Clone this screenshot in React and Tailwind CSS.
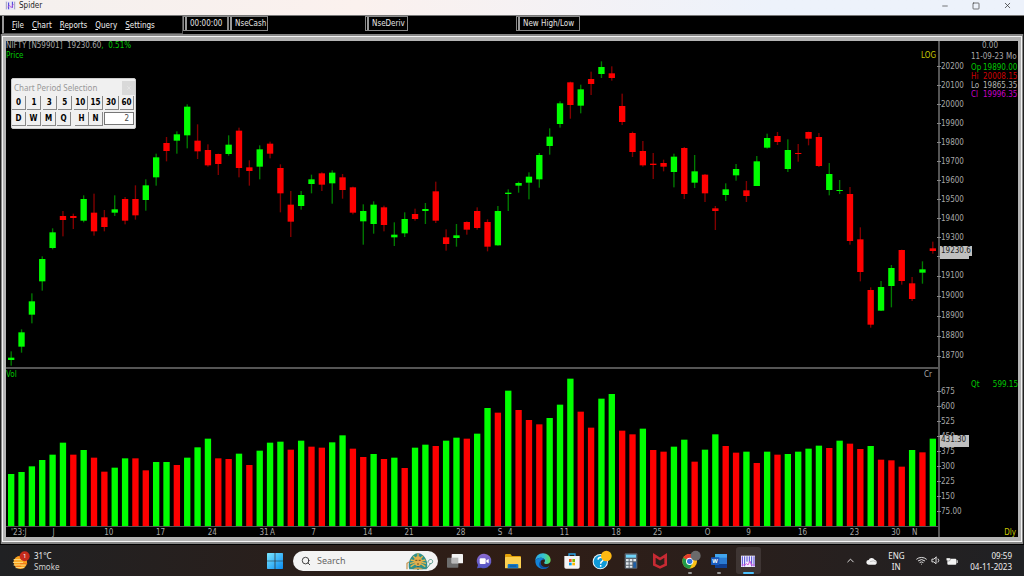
// App.jsx
import React, { useState } from 'react';
import { FiMinus, FiSquare, FiX, FiSearch, FiChevronUp, FiWifi, FiVolume1 } from 'react-icons/fi';

const GREEN = '#00ff00';
const RED = '#ff0000';

// [direction, high, body top, body bottom, low]
const candles = [
  ['g', 1054, 1073, 1080, 1097], ['g', 988, 997, 1040, 1058], ['g', 880, 904, 944, 970], ['g', 769, 777, 844, 872],
  ['g', 685, 697, 744, 748], ['r', 633, 648, 660, 709], ['r', 641, 648, 654, 687], ['g', 586, 597, 662, 667],
  ['r', 581, 638, 694, 707], ['r', 630, 652, 681, 694], ['g', 586, 628, 638, 648], ['r', 591, 597, 662, 673],
  ['r', 556, 597, 646, 659], ['g', 538, 556, 600, 632], ['g', 461, 472, 532, 557], ['r', 411, 429, 453, 484],
  ['g', 394, 403, 422, 461], ['g', 313, 320, 406, 445], ['r', 373, 422, 454, 477], ['r', 433, 450, 496, 500],
  ['r', 461, 462, 492, 525], ['g', 406, 434, 462, 467], ['r', 383, 392, 504, 532], ['r', 481, 502, 513, 557],
  ['g', 436, 448, 500, 538], ['r', 425, 431, 461, 475], ['r', 493, 504, 580, 637], ['r', 573, 614, 665, 711],
  ['g', 573, 585, 618, 629], ['g', 524, 538, 552, 580], ['r', 517, 520, 554, 573], ['g', 511, 518, 550, 611],
  ['r', 522, 532, 570, 596], ['r', 560, 562, 638, 643], ['g', 613, 633, 664, 734], ['g', 604, 614, 672, 701],
  ['r', 617, 622, 675, 694], ['g', 667, 704, 712, 738], ['g', 637, 657, 700, 711], ['r', 626, 642, 657, 662],
  ['g', 609, 627, 633, 672], ['r', 545, 574, 662, 669], ['r', 688, 712, 732, 752], ['g', 672, 706, 714, 740],
  ['r', 664, 666, 689, 704], ['r', 622, 633, 684, 689], ['r', 658, 666, 740, 754], ['g', 618, 633, 736, 737],
  ['g', 568, 578, 582, 633], ['g', 545, 549, 557, 578], ['g', 517, 530, 548, 598], ['g', 459, 465, 538, 563],
  ['g', 385, 410, 438, 464], ['g', 304, 310, 372, 383], ['r', 245, 247, 315, 356], ['g', 254, 268, 317, 340],
  ['r', 215, 237, 252, 285], ['g', 184, 201, 222, 234], ['r', 199, 220, 234, 242], ['r', 281, 318, 366, 375],
  ['r', 395, 399, 456, 471], ['r', 423, 453, 496, 500], ['r', 459, 491, 495, 537], ['r', 479, 489, 500, 514],
  ['g', 461, 470, 516, 562], ['r', 441, 444, 582, 597], ['g', 465, 514, 548, 564], ['r', 522, 524, 580, 606],
  ['r', 618, 625, 633, 690], ['g', 550, 568, 585, 603], ['g', 492, 507, 526, 542], ['r', 543, 571, 588, 606],
  ['g', 468, 484, 558, 558], ['g', 401, 414, 443, 446], ['r', 396, 408, 426, 435], ['g', 418, 450, 507, 516],
  ['r', 432, 459, 462, 485], ['r', 395, 396, 416, 436], ['r', 399, 411, 498, 501], ['g', 489, 522, 570, 586],
  ['g', 540, 570, 573, 582], ['r', 561, 582, 723, 734], ['r', 682, 718, 816, 844], ['r', 862, 870, 974, 983],
  ['g', 843, 861, 932, 933], ['g', 795, 804, 858, 922], ['r', 749, 750, 843, 854], ['r', 831, 850, 897, 903],
  ['g', 784, 808, 818, 851], ['r', 725, 745, 753, 761],
];

const volumes = [
  156, 162, 179, 198, 214, 250, 214, 228, 205, 163, 175, 203, 203, 167, 192, 192, 183, 205, 236, 262,
  203, 201, 217, 183, 226, 250, 253, 229, 256, 238, 235, 251, 272, 232, 207, 216, 201, 205, 174, 235,
  244, 240, 256, 265, 262, 277, 354, 340, 406, 348, 318, 305, 324, 364, 442, 343, 295, 382, 396, 286,
  275, 292, 228, 223, 238, 259, 193, 229, 275, 240, 220, 223, 189, 223, 214, 216, 223, 232, 241, 234,
  256, 247, 231, 240, 199, 197, 178, 228, 221, 262,
];
const volumeDirs = 'ggggggrgrrggrrggrgggrrgrgggrgrrggrrgrgrggrggrggrgrrrgggrrggrrgrrggrggrrgrgrggggrgrrgrrrgrg';

const priceTicks = [20200, 20100, 20000, 19900, 19800, 19700, 19600, 19500, 19400, 19300, 19200, 19100, 19000, 18900, 18800, 18700];
const volTicks = ['675', '600', '525', '450', '375', '300', '225', '150', '75.00'];

// bar index -> label
const dates = [
  [0, "'23:J"], [4, 'J'], [9, '10'], [14, '17'], [19, '24'], [24, '31'], [25, 'A'], [29, '7'], [34, '14'], [38, '21'],
  [43, '28'], [47, 'S'], [48, '4'], [53, '11'], [58, '18'], [62, '25'], [67, 'O'], [71, '9'], [76, '16'], [81, '23'],
  [85, '30'], [87, 'N'],
];

const CHART_W = 2796;
const barX = (i) => ((i + 0.5) * CHART_W) / 90;

const SpiderIcon = ({ className }) => (
  <svg viewBox="0 0 14 12" className={className} aria-hidden="true">
    <rect width="14" height="12" fill="#e9e6f5" />
    <path d="M1.5 1v10M12.5 1v10" stroke="#8f8fa8" strokeWidth="1" />
    <path d="M4.5 2v9M9.5 1v8" stroke="#3a35d8" strokeWidth="1.3" />
    <path d="M3 8l3-2 2 3 3-5" stroke="#c04fd8" strokeWidth="1" fill="none" />
  </svg>
);

const TitleBar = () => (
  <header className="flex h-4 shrink-0 items-start justify-between border-b border-[#777] bg-linear-to-r from-[#f4f0ee] via-[#fbf1ee] via-35% to-[#edf2fb] to-75%">
    <div className="flex h-[11px] items-center gap-[3px] pl-[5px]">
      <SpiderIcon className="h-[9px] w-[11px]" />
      <h1 className="text-[8px] leading-none text-[#222]">Spider</h1>
    </div>
    <div className="flex h-[11px] items-center gap-[23px] pr-3 text-[#333]">
      <button aria-label="Minimize"><FiMinus size={8} /></button>
      <button aria-label="Maximize"><FiSquare size={8} /></button>
      <button aria-label="Close"><FiX size={9} /></button>
    </div>
  </header>
);

const Grip = () => <span className="h-full w-[2px] shrink-0 border-x border-[#999] bg-[#444]" />;

const ToolButton = ({ className, children }) => (
  <button className={`flex h-[15px] items-center gap-[3px] border border-[#888] pl-px whitespace-nowrap text-[#e4e4e4] ${className}`}>
    <Grip />
    {children}
  </button>
);

const Toolbar = () => (
  <div className="flex h-[18px] shrink-0 items-start bg-black pl-[2px] text-[8px] leading-[14px]">
    <nav className="flex h-[18px] w-[181px] items-center gap-2 border-r border-b border-[#555] text-[#f0f0f0]">
      <Grip />
      {['File', 'Chart', 'Reports', 'Query', 'Settings'].map(m => (
        <button key={m} className="pt-[2px]"><span className="underline">{m[0]}</span>{m.slice(1)}</button>
      ))}
    </nav>
    <ToolButton className="w-[45px]">00:00:00</ToolButton>
    <ToolButton className="w-10">NseCash</ToolButton>
    <ToolButton className="ml-[97px] w-[43px]">NseDeriv</ToolButton>
    <ToolButton className="ml-[108px] w-16">New High/Low</ToolButton>
  </div>
);

const PriceChart = () => (
  <svg viewBox="0 123 2796 978" preserveAspectRatio="none" className="block h-full w-full" role="img" aria-label="Price">
    {candles.map(([dir, hi, top, bottom, lo], i) => (
      <g key={i}>
        <rect x={barX(i) - 2} y={hi} width="4" height={lo - hi} fill={dir === 'g' ? '#007c00' : '#840000'} />
        <rect x={barX(i) - 9.5} y={top} width="19" height={bottom - top} fill={dir === 'g' ? GREEN : RED} />
      </g>
    ))}
  </svg>
);

const VolumeChart = () => (
  <svg viewBox="0 0 2796 471" preserveAspectRatio="none" className="block h-full w-full" role="img" aria-label="Volume">
    {volumes.map((v, i) => (
      <rect key={i} x={barX(i) - 9.5} y={471 - v} width="19" height={v} fill={volumeDirs[i] === 'g' ? GREEN : RED} />
    ))}
  </svg>
);

const Tick = ({ className, children }) => (
  <li className={`flex items-center ${className}`}>
    <span className="-ml-[3px] h-px w-1 shrink-0 bg-[#888]" />
    {children}
  </li>
);

const PeriodButton = ({ active, onClick, children }) => (
  <button onClick={onClick} aria-pressed={active}
    className="h-[14px] w-[14px] border-r border-b border-[#888] bg-[#f0f0f0] text-center text-[8px] leading-[14px] font-bold text-black">
    {children}
  </button>
);

const PeriodDialog = () => {
  const [period, setPeriod] = useState('D');
  const [count, setCount] = useState('2');
  const button = (p) => <PeriodButton key={p} active={period === p} onClick={() => setPeriod(p)}>{p}</PeriodButton>;

  return (
    <section className="absolute top-[37px] left-[5px] h-[51px] w-[125px] rounded-[2px] border border-[#ccc] bg-[#f0f0f0]">
      <div className="flex h-[17px] items-center justify-between pl-[2px]">
        <h2 className="font-['Noto_Sans',sans-serif] text-[8px] text-[#999]">Chart Period Selection</h2>
        <button aria-label="Close" className="flex h-[14px] w-[13px] items-center justify-center bg-[#d9d9d9] text-[#eee]"><FiX size={6} /></button>
      </div>
      <div className="flex justify-between pr-px">{['0', '1', '3', '5', '10', '15', '30', '60'].map(button)}</div>
      <div className="mt-[2px] flex pr-px">
        <div className="flex gap-px">{['D', 'W', 'M', 'Q'].map(button)}</div>
        <div className="ml-1 flex">{['H', 'N'].map(button)}</div>
        <input aria-label="Period count" value={count} onChange={e => setCount(e.target.value)}
          className="ml-px h-[13px] min-w-0 flex-1 border border-[#777] bg-white pr-1 text-right text-[8px] text-[#444]" />
      </div>
    </section>
  );
};

const quote = [
  ['Op', '19890.00', 'text-[#00c800]'],
  ['Hi', '20008.15', 'text-[#d00000]'],
  ['Lo', '19865.35', 'text-[#b4b4b4]'],
  ['Cl', '19996.35', 'text-[#c800c8]'],
];

const ChartWindow = () => (
  <main className="flex min-h-0 flex-1 flex-col border-b border-black bg-[#222] px-px">
    <div className="flex min-h-0 flex-1 flex-col border-x border-y-2 border-[#888]">
      <div className="flex min-h-0 flex-1 flex-col border border-[#f4f4f4] bg-[#b4b4b4] px-[3px] py-1">
        <div className="flex min-h-0 flex-1 flex-col overflow-hidden bg-black text-[8px] leading-[10px] text-[#a8a8a8]">
          <div className="flex min-h-0 flex-[328]">
            <div className="relative min-w-0 flex-1 border-b-2 border-[#555]">
              <PriceChart />
              <div className="absolute top-0 left-0">
                <p className="flex">
                  <span className="w-[61px]">NIFTY [N59901]</span>
                  <span>19230.60</span>
                  <span className="text-[#00c800]">,&nbsp; 0.51%</span>
                </p>
                <p className="text-[#00c800]">Price</p>
              </div>
              <p className="absolute top-[10px] right-[2px] text-[#c8c800]">LOG</p>
              <PeriodDialog />
            </div>
            <div className="relative flex w-20 border-l-2 border-[#555]">
              <ul className="w-[31px] pt-4">
                {priceTicks.map(p => <Tick key={p} className={p < 19200 ? 'h-5' : 'h-[19px]'}>{p}</Tick>)}
              </ul>
              <div className="absolute top-[206px] left-0 h-3 w-[29px] bg-[#c0c0c0]" />
              <p className="absolute top-[205px] left-0 w-8 bg-[#c0c0c0] pl-px text-[#222]">19230.6</p>
              <div className="w-[47px] overflow-hidden whitespace-nowrap">
                <p className="pl-[11px]">0.00</p>
                <p className="pt-px">11-09-23 Mo</p>
                <dl>
                  {quote.map(([k, v, color]) => (
                    <div key={k} className={`flex h-[9px] pt-px ${color}`}>
                      <dt className="w-3 shrink-0">{k}</dt>
                      <dd>{v}</dd>
                    </div>
                  ))}
                </dl>
              </div>
            </div>
          </div>
          <div className="flex min-h-0 flex-[158]">
            <div className="relative min-w-0 flex-1 border-b border-[#555]">
              <VolumeChart />
              <p className="absolute top-px left-0 text-[#00c800]">Vol</p>
              <p className="absolute top-px right-[6px]">Cr</p>
            </div>
            <div className="relative flex w-20 border-l-2 border-[#555]">
              <ul className="w-[31px] pt-[15px]">
                {volTicks.map(v => <Tick key={v} className="h-[15px]">{v}</Tick>)}
              </ul>
              <p className="absolute top-[66px] left-0 h-3 w-[29px] bg-[#c0c0c0] pl-px text-[#222]">431.30</p>
              <dl className="mt-[11px] flex h-[10px] w-[47px] justify-between self-start text-[#00c800]">
                <dt>Qt</dt>
                <dd>599.15</dd>
              </dl>
            </div>
          </div>
          <div className="flex h-[10px] shrink-0 leading-3">
            <div className="grid min-w-0 flex-1 grid-cols-[repeat(90,minmax(0,1fr))] grid-rows-1">
              {dates.map(([i, label]) => (
                <span key={i} className="row-start-1 pl-[5px] whitespace-nowrap" style={{ gridColumnStart: i + 1 }}>{label}</span>
              ))}
            </div>
            <p className="w-20 border-l-2 border-[#555] pr-[2px] text-right text-[#c8c800]">Dly</p>
          </div>
        </div>
      </div>
    </div>
  </main>
);

const WeatherIcon = () => (
  <svg viewBox="0 0 54 60" className="h-5 w-[18px]" aria-hidden="true">
    <circle cx="25" cy="34" r="20" fill="#f9a11b" />
    <path d="M6 26h30M4 34h28M6 42h34M12 50h24" stroke="#ffe08a" strokeWidth="3" strokeLinecap="round" />
    <path d="M26 38h18M14 46h12" stroke="#ef7a1a" strokeWidth="4" strokeLinecap="round" />
    <circle cx="38" cy="16" r="15" fill="#c42b1c" />
    <text x="38" y="22" fontSize="18" fill="#fff" textAnchor="middle">1</text>
  </svg>
);

const WindowsIcon = () => (
  <svg viewBox="0 0 48 48" className="h-4 w-4" aria-hidden="true">
    <defs>
      <linearGradient id="win" x1="0" y1="0" x2="1" y2="1">
        <stop offset="0" stopColor="#7be8ff" /><stop offset="1" stopColor="#0a8bf0" />
      </linearGradient>
    </defs>
    <path d="M0 2q0-2 2-2h21v23H0zM25 0h21q2 0 2 2v21H25zM0 25h23v23H2q-2 0-2-2zM25 25h23v21q0 2-2 2H25z" fill="url(#win)" />
  </svg>
);

const PharaohIcon = () => (
  <svg viewBox="0 0 84 54" className="h-[18px] w-7" aria-hidden="true">
    <path d="M10 52C4 36 12 6 36 3c24 3 32 33 26 49z" fill="#2f8f8a" />
    <path d="M14 44l12-8M12 34l13-3M14 24l13 3M22 13l8 8M36 4v12M50 13l-8 8M58 24l-13 3M60 34l-13-3M58 44l-12-8" stroke="#e6b84a" strokeWidth="4" />
    <ellipse cx="36" cy="28" rx="12" ry="15" fill="#e2ad4c" />
    <path d="M28 25h6M38 25h6M33 36h6" stroke="#4b3a1e" strokeWidth="2.5" />
    <path d="M33 42h6v11h-6z" fill="#1f6a86" />
    <path d="M20 52q16-12 32 0z" fill="#caa046" />
    <path d="M3 52V34l6-4" stroke="#c99b5a" strokeWidth="4" fill="none" />
    <path d="M62 50l12-16M66 32c0-12 14-12 14-4s-8 8-10 6" stroke="#5b9a8b" strokeWidth="3" fill="none" />
  </svg>
);

// taskbar apps, all on a 48 unit square
const apps = [
  ['Task view', (
    <>
      <rect x="0" y="14" width="34" height="30" rx="2" fill="#6d6d6d" />
      <rect x="14" y="3" width="34" height="28" rx="2" fill="#f3f3f3" />
      <path d="M14 14h20v17H14z" fill="#b9b9b9" />
    </>
  )],
  ['Chat', (
    <>
      <defs>
        <linearGradient id="chat" x1="0" y1="0" x2="0" y2="1">
          <stop offset="0" stopColor="#8c6bd0" /><stop offset="1" stopColor="#4f55c4" />
        </linearGradient>
      </defs>
      <path d="M24 2a22 22 0 1 1-9 42L3 46l3-10A22 22 0 0 1 24 2z" fill="url(#chat)" />
      <rect x="11" y="16" width="18" height="17" rx="3" fill="#fff" />
      <path d="M31 22l7-4v13l-7-4z" fill="#fff" />
    </>
  )],
  ['File Explorer', (
    <>
      <path d="M0 6q0-3 3-3h13l5 6h24q3 0 3 3v8H0z" fill="#e3a008" />
      <rect x="0" y="12" width="48" height="34" rx="2" fill="#fcd050" />
      <path d="M8 46V36q0-3 3-3h26q3 0 3 3v10z" fill="#1579c6" />
      <path d="M14 39h20" stroke="#0b4f8c" strokeWidth="3" />
    </>
  )],
  ['Edge', (
    <>
      <defs>
        <linearGradient id="edge" x1="0" y1="0" x2="1" y2="0">
          <stop offset="0" stopColor="#2ba6e8" /><stop offset="0.55" stopColor="#36c6cf" /><stop offset="1" stopColor="#66dd55" />
        </linearGradient>
      </defs>
      <path d="M1 24C1 10 11 1 24 1s23 10 23 20c0 8-6 12-12 12-5 0-8-2-8-3 0-2 3-3 3-7 0-5-5-9-12-9C9 14 3 18 1 24z" fill="url(#edge)" />
      <path d="M1 24c2-7 9-10 17-10 6 0 10 3 11 6-8-3-13 3-13 9 0 9 8 14 16 14 5 0 9-2 11-4-4 6-11 9-18 9C10 48 1 37 1 24z" fill="#1383d8" />
      <path d="M21 20c-3 3-4 6-4 9 0 9 8 14 16 13 4 0 8-2 10-4-6 9-15 11-22 8-10-4-13-19 0-26z" fill="#0b4fa0" />
    </>
  )],
  ['Microsoft Store', (
    <>
      <path d="M15 11V3h18v8" stroke="#2aa3e6" strokeWidth="4" fill="none" />
      <path d="M1 9h46v33q0 5-5 5H6q-5 0-5-5z" fill="#f4f4f4" />
      <path d="M15 18h8v9h-8z" fill="#f25022" />
      <path d="M25 18h8v9h-8z" fill="#7fba00" />
      <path d="M15 29h8v8h-8z" fill="#00a4ef" />
      <path d="M25 29h8v8h-8z" fill="#ffb900" />
    </>
  )],
  ['Get Help', (
    <>
      <circle cx="22" cy="26" r="23" fill="#e8f6fd" />
      <circle cx="22" cy="26" r="20" fill="#0f9ad8" />
      <path d="M15 20q1-7 8-7t8 6q0 4-5 7-3 2-3 6M23 36v5" stroke="#fff" strokeWidth="4.5" fill="none" />
      <circle cx="40" cy="9" r="16" fill="#fdb913" />
    </>
  )],
  ['Calculator', (
    <>
      <rect x="5" y="1" width="38" height="46" rx="3" fill="#59636e" />
      <rect x="9" y="5" width="30" height="9" fill="#6fd3f7" />
      <path d="M9 18h8v7H9zM20 18h8v7h-8zM31 18h8v7h-8zM9 28h8v7H9zM20 28h8v7h-8zM9 38h8v6H9zM20 38h8v6h-8z" fill="#dfe6ec" />
      <path d="M31 28h8v16h-8z" fill="#1d5fa8" />
    </>
  )],
  ['McAfee', <path d="M7 7v28l17 8 17-8V7L24 18z" stroke="#c62a33" strokeWidth="8" fill="none" />],
  ['Chrome', (
    <>
      <circle cx="23" cy="25" r="22" fill="#fbc116" />
      <path d="M23 25L4 14a22 22 0 0 1 38 0z" fill="#e33b2e" />
      <path d="M4 14a22 22 0 0 0 19 33l9-17-9-5z" fill="#229a48" />
      <circle cx="23" cy="25" r="11" fill="#fff" />
      <circle cx="23" cy="25" r="8" fill="#2f74e0" />
      <circle cx="41" cy="8" r="15" fill="#6b6b6b" />
    </>
  )],
  ['Word', (
    <>
      <rect x="12" y="3" width="36" height="42" rx="2" fill="#2b7cd3" />
      <path d="M12 3h36v11H12z" fill="#41a5ee" />
      <path d="M12 33h36v12H12z" fill="#103f91" />
      <rect x="0" y="13" width="25" height="23" rx="2" fill="#185abd" />
      <text x="12" y="30" fontSize="17" fontWeight="bold" fill="#fff" textAnchor="middle">W</text>
    </>
  )],
  ['Spider', (
    <>
      <rect x="3" y="8" width="42" height="34" fill="#f3f0ff" />
      <path d="M7 10v30M14 10v30M21 10v16M28 10v18M35 10v30M42 10v30" stroke="#4a46d0" strokeWidth="3" />
      <path d="M5 36h9l6-4 4 4 6-12 4 12h10" stroke="#d85ae0" strokeWidth="3" fill="none" />
    </>
  )],
];
const running = ['Chrome', 'Word'];

const Taskbar = () => (
  <footer className="flex h-[31px] shrink-0 items-center bg-linear-to-r from-[#202123] via-[#301d15] to-[#202124] font-['Noto_Sans',sans-serif] text-[8px] text-[#f0f0f0]">
    <div className="flex w-[267px] items-center gap-1 pl-3">
      <WeatherIcon />
      <div className="leading-[11px]">
        <p>31°C</p>
        <p className="text-[#d0d0d0]">Smoke</p>
      </div>
    </div>
    <button aria-label="Start"><WindowsIcon /></button>
    <div className="ml-[10px] flex h-5 w-[145px] items-center rounded-full bg-[#f3f3f3] pr-1 pl-2 text-[#222]">
      <FiSearch size={10} />
      <input aria-label="Search" placeholder="Search" className="ml-[6px] w-0 min-w-0 flex-1 text-[9px] outline-none placeholder:text-[#666]" />
      <PharaohIcon />
    </div>
    <div className="ml-[2px] flex h-full w-[323px]">
      {apps.map(([name, art]) => (
        <button key={name} aria-label={name}
          className={`relative m-[2px] flex min-w-0 flex-1 items-center justify-center rounded-[3px] ${name === 'Spider' ? 'bg-white/10' : ''}`}>
          <svg viewBox="0 0 48 48" className="h-4 w-4 overflow-visible">{art}</svg>
          {running.includes(name) && <span className="absolute bottom-0 h-[2px] w-1 rounded-full bg-[#999]" />}
          {name === 'Spider' && <span className="absolute bottom-0 h-[2px] w-[11px] rounded-full bg-[#4cc2ff]" />}
        </button>
      ))}
    </div>
    <div className="ml-auto flex items-center pr-3">
      <button aria-label="Show hidden icons"><FiChevronUp size={11} /></button>
      <svg viewBox="0 0 36 24" className="ml-[10px] h-2 w-3" role="img" aria-label="OneDrive">
        <path d="M8 23a7 7 0 0 1 0-14A10 10 0 0 1 26 8a8 8 0 0 1 2 15z" fill="#f4f4f4" />
        <path d="M12 14q10-6 20 2" stroke="#aaa" strokeWidth="2" fill="none" />
      </svg>
      <p className="ml-[10px] w-4 text-center leading-[11px]">ENG IN</p>
      <div className="ml-3 flex items-center gap-1">
        <FiWifi size={11} />
        <FiVolume1 size={11} />
        <svg viewBox="0 0 36 30" className="h-[10px] w-3" role="img" aria-label="Battery">
          <rect x="4" y="8" width="27" height="18" rx="3" fill="#f4f4f4" />
          <path d="M32 13h3v8h-3z" fill="#f4f4f4" />
          <path d="M4 0v6M10 0v6M1 6h12v5q0 4-6 4t-6-4z" stroke="#222" strokeWidth="1" fill="#f4f4f4" />
        </svg>
      </div>
      <div className="ml-3 text-right leading-[11px]">
        <p>09:59</p>
        <p>04-11-2023</p>
      </div>
    </div>
  </footer>
);

const App = () => (
  <div className="flex h-screen flex-col overflow-hidden bg-black font-['DejaVu_Sans_Condensed','DejaVu_Sans',sans-serif]">
    <TitleBar />
    <Toolbar />
    <ChartWindow />
    <Taskbar />
  </div>
);

export default App;
